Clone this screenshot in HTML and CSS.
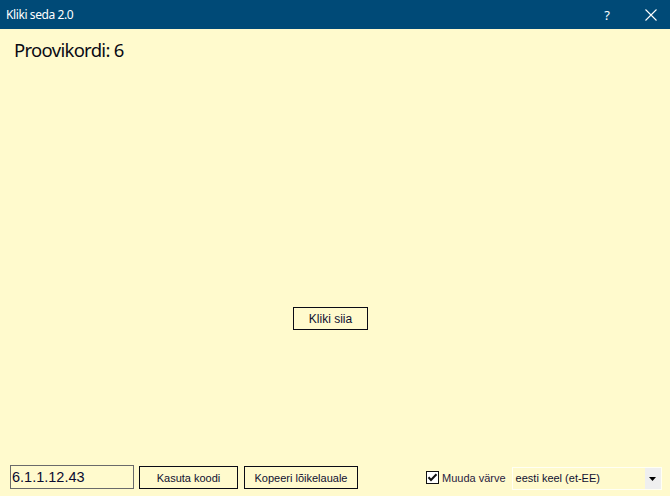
FILE: index.html
```html
<!DOCTYPE html>
<html lang="et">
<head>
<meta charset="utf-8">
<title>Kliki seda 2.0</title>
<link rel="stylesheet" href="styles.css">
</head>
<body>
<div class="window">
  <div class="titlebar">
    <span class="title">Kliki seda 2.0</span>
    <span class="tb-btn help">?</span>
    <span class="tb-btn close">
      <svg width="12" height="12" viewBox="0 0 12 12"><path d="M0.5 0.5L11.5 11.5M11.5 0.5L0.5 11.5" stroke="#fff" stroke-width="1.1" fill="none"/></svg>
    </span>
  </div>
  <div class="main">
    <div class="heading">Proovikordi: 6</div>
    <div class="center-row">
      <button class="btn btn-click">Kliki siia</button>
    </div>
    <div class="footer">
      <div class="codebox">6.1.1.12.43</div>
      <button class="btn btn-use">Kasuta koodi</button>
      <button class="btn btn-copy">Kopeeri lõikelauale</button>
      <label class="check">
        <span class="box">
          <svg width="11" height="11" viewBox="0 0 11 11"><path d="M1.5 5.3L4 8L9.5 2.3" stroke="#111" stroke-width="2" fill="none"/></svg>
        </span>
        <span class="check-label">Muuda värve</span>
      </label>
      <div class="select">
        <span class="select-text">eesti keel (et-EE)</span>
        <span class="select-arrow">
          <svg width="7" height="4" viewBox="0 0 7 4"><path d="M0 0H7L3.5 4Z" fill="#000"/></svg>
        </span>
      </div>
    </div>
  </div>
</div>
</body>
</html>
```
FILE: styles.css
```css
html, body {
  margin: 0;
  padding: 0;
}
body {
  width: 670px;
  height: 496px;
  overflow: hidden;
  background: #fffacd;
  font-family: "Liberation Sans", Arial, sans-serif;
}
.window {
  display: flex;
  flex-direction: column;
  width: 670px;
  height: 496px;
}
.titlebar {
  height: 29px;
  flex: 0 0 29px;
  background: #004a77;
  color: #fff;
  display: flex;
  align-items: center;
}
.title {
  font-family: "Noto Sans", "Open Sans", sans-serif;
  font-size: 12px;
  margin-left: 6px;
  flex: 1;
  letter-spacing: -0.4px;
}
.tb-btn {
  display: flex;
  align-items: center;
  justify-content: center;
}
.help {
  font-family: "Noto Sans", sans-serif;
  font-size: 13px;
  width: 12px;
  margin-right: 19px;
}
.close {
  width: 38px;
}
.main {
  flex: 1;
  display: flex;
  flex-direction: column;
}
.heading {
  font-family: "Noto Sans", "Open Sans", sans-serif;
  font-size: 18.5px;
  line-height: 24px;
  letter-spacing: -0.7px;
  color: #0a0a14;
  margin-top: 9px;
  margin-left: 14px;
}
.center-row {
  display: flex;
  margin-top: 245px;
}
.btn {
  font-family: "Liberation Sans", Arial, sans-serif;
  font-size: 11px;
  color: #101030;
  background: transparent;
  border: 1px solid #0a0a14;
  padding: 0;
  margin: 0;
  box-sizing: border-box;
}
.btn-click {
  margin-left: 293px;
  width: 75px;
  height: 23px;
  font-size: 12px;
}
.footer {
  margin-top: auto;
  margin-bottom: 6px;
  display: flex;
  align-items: flex-start;
  height: 25px;
}
.codebox {
  margin-left: 10px;
  width: 124px;
  height: 24px;
  box-sizing: border-box;
  border: 1px solid #6a6a6a;
  font-size: 14.5px;
  line-height: 22px;
  padding-left: 1px;
  color: #0a0a30;
}
.btn-use {
  margin-left: 5px;
  margin-top: 1px;
  width: 99px;
  height: 23px;
}
.btn-copy {
  margin-left: 6px;
  margin-top: 1px;
  width: 114px;
  height: 23px;
}
.check {
  margin-left: 68px;
  margin-top: 6px;
  display: flex;
  align-items: center;
  height: 13px;
}
.box {
  width: 13px;
  height: 13px;
  box-sizing: border-box;
  border: 1px solid #111;
  background: #fff;
  display: flex;
  align-items: center;
  justify-content: center;
}
.check-label {
  margin-left: 3px;
  font-size: 11px;
  color: #2a1a40;
}
.select {
  margin-left: 6px;
  margin-top: 2px;
  width: 150px;
  height: 23px;
  box-sizing: border-box;
  border: 1px solid #fffff4;
  display: flex;
  align-items: stretch;
}
.select-text {
  flex: 1;
  font-size: 11px;
  line-height: 21px;
  padding-left: 3px;
  color: #101030;
}
.select-arrow {
  width: 16px;
  background: #efefef;
  display: flex;
  align-items: center;
  justify-content: center;
}
```
